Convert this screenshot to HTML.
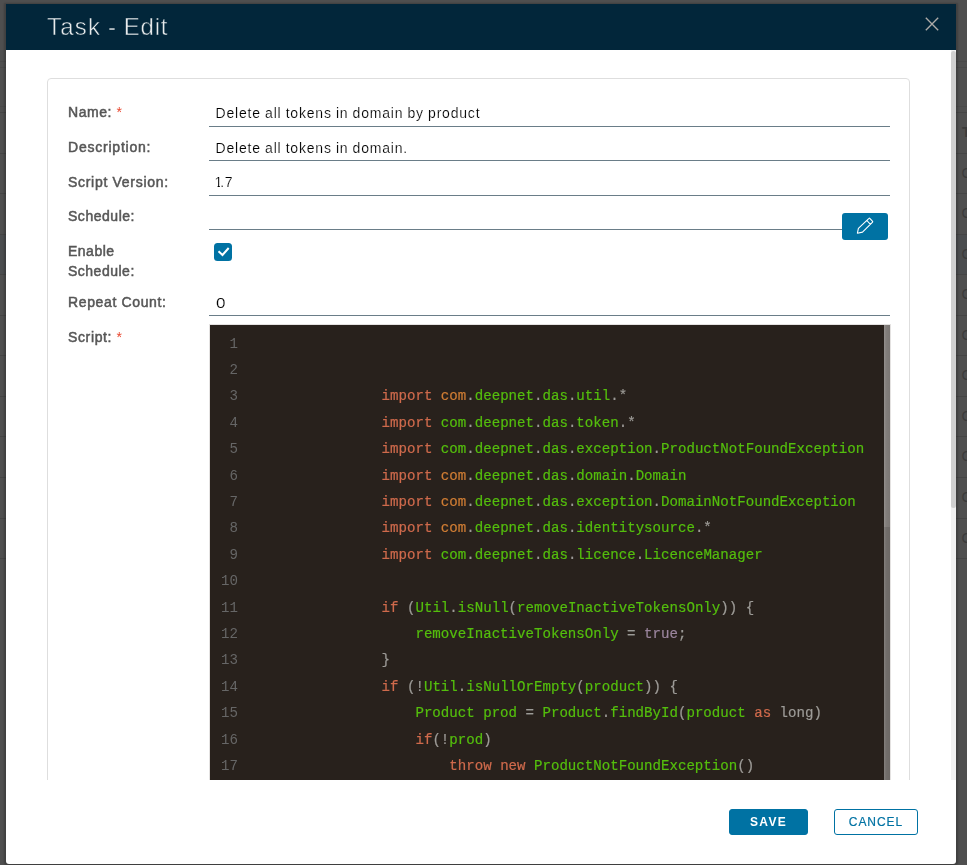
<!DOCTYPE html>
<html>
<head>
<meta charset="utf-8">
<title>Task - Edit</title>
<style>
html,body{margin:0;padding:0;}
body{width:967px;height:865px;overflow:hidden;position:relative;background:#4f4f4f;font-family:"Liberation Sans",sans-serif;}
.abs{position:absolute;}
/* backdrop table hints */
.bgline{position:absolute;height:1px;background:#454545;}
.bgchar{position:absolute;font-size:14px;line-height:16px;color:#3b3b3b;font-weight:bold;}
/* modal */
#modal{will-change:transform;position:absolute;left:6px;top:4px;width:950px;height:860px;background:#fff;border-radius:0 0 3px 3px;overflow:hidden;box-shadow:0 1px 2px 2px rgba(0,0,0,0.2);}
#hdr{position:absolute;left:0;top:0;width:950px;height:46px;background:#02263a;}
#title{position:absolute;left:41px;top:9px;font-size:24px;line-height:28px;color:#e8ebec;white-space:pre;letter-spacing:0.85px;word-spacing:-0.7px;-webkit-text-stroke:0.5px #02263a;}
/* scroll area */
#scroll{position:absolute;left:0;top:46px;width:950px;height:730px;overflow:hidden;}
#track{position:absolute;left:945px;top:0;width:5px;height:730px;background:#f1f1f1;}
#thumb{position:absolute;left:945px;top:1px;width:5px;height:456.5px;background:#d0d0d0;border-radius:2.5px;}
#card{position:absolute;left:41px;top:28px;width:863px;height:760px;border:1px solid #dedede;border-radius:4px;box-sizing:border-box;}
.lbl{position:absolute;left:62px;font-size:14px;line-height:20px;font-weight:normal;color:#565656;white-space:pre;letter-spacing:0.62px;-webkit-text-stroke:0.5px #565656;}
.req{color:#e8462e;-webkit-text-stroke:0;}
.val{position:absolute;left:209.6px;font-size:14px;line-height:20px;color:#000;white-space:pre;letter-spacing:0.8px;word-spacing:-0.5px;-webkit-text-stroke:0.18px #fff;}
.ul{position:absolute;left:203px;width:681px;height:1px;background:#6a7d88;}
/* code */
#cm{position:absolute;left:204px;top:275px;width:680px;height:460px;background:#28211c;overflow:hidden;font-family:"Liberation Mono",monospace;font-size:14.11px;}
.ln{position:absolute;left:0.5px;margin-top:1.3px;width:27.5px;text-align:right;color:#666666;line-height:26.4px;height:26.4px;white-space:pre;}
.cl{position:absolute;left:36.1px;margin-top:1.3px;-webkit-text-stroke:0.2px;color:#9d9b97;line-height:26.4px;height:26.4px;white-space:pre;}
.k{color:#cf6a4c}.v{color:#54be0d}.d{color:#cf7d34}.a{color:#9b859d}
#cmsb{position:absolute;left:674px;top:0;width:6px;height:460px;background:linear-gradient(to right,#85817e,#726e6b 35%,#6d6966);}
#cmth{position:absolute;left:674px;top:0;width:6px;height:202px;background:linear-gradient(to right,#94908d,#827e7b 35%,#7b7774);}
/* footer */
.btn{position:absolute;top:805px;height:26px;box-sizing:border-box;border-radius:3px;font-size:12px;line-height:24px;text-align:center;white-space:pre;}
#save{left:723px;width:79px;background:#0072a3;border:1px solid #0072a3;color:#fff;font-weight:bold;letter-spacing:1.3px;}
#cancel{left:828px;width:84px;background:#fff;border:1px solid #0072a3;color:#0072a3;letter-spacing:0.95px;-webkit-text-stroke:0.2px #0072a3;}
</style>
</head>
<body>
<!-- backdrop -->
<div id="bg">
<div class="abs" style="left:0;top:234px;width:967px;height:40px;background:#4b4d4f"></div>
<div class="bgline" style="left:0;top:106px;width:967px;background:#4a4a4a"></div>
<div class="bgline" style="left:0;top:112px;width:967px"></div>
<div class="bgline" style="left:0;top:153px;width:967px"></div>
<div class="bgline" style="left:0;top:193px;width:967px"></div>
<div class="bgline" style="left:0;top:234px;width:967px"></div>
<div class="bgline" style="left:0;top:274px;width:967px"></div>
<div class="bgline" style="left:0;top:315px;width:967px"></div>
<div class="bgline" style="left:0;top:355px;width:967px"></div>
<div class="bgline" style="left:0;top:396px;width:967px"></div>
<div class="bgline" style="left:0;top:436px;width:967px"></div>
<div class="bgline" style="left:0;top:477px;width:967px"></div>
<div class="bgline" style="left:0;top:518px;width:967px"></div>
<div class="bgline" style="left:0;top:558px;width:967px"></div>
<div class="bgline" style="left:0;top:61px;width:967px;background:#494949"></div>
<div class="bgline" style="left:0;top:67px;width:967px;background:#494949"></div>
<div class="bgchar" style="left:962px;top:124px">T</div>
<div class="bgchar" style="left:961.5px;top:165px;font-weight:normal">C</div>
<div class="bgchar" style="left:961.5px;top:205px;font-weight:normal">C</div>
<div class="bgchar" style="left:961.5px;top:246px;font-weight:normal">C</div>
<div class="bgchar" style="left:961.5px;top:286px;font-weight:normal">C</div>
<div class="bgchar" style="left:961.5px;top:327px;font-weight:normal">C</div>
<div class="bgchar" style="left:961.5px;top:367px;font-weight:normal">C</div>
<div class="bgchar" style="left:961.5px;top:408px;font-weight:normal">C</div>
<div class="bgchar" style="left:961.5px;top:448px;font-weight:normal">C</div>
<div class="bgchar" style="left:961.5px;top:489px;font-weight:normal">C</div>
<div class="bgchar" style="left:961.5px;top:530px;font-weight:normal">C</div>
</div>

<div id="modal">
  <div id="hdr">
    <div id="title"><span style="letter-spacing:1.2px">Task</span> - Edit</div>
    <svg class="abs" style="left:918px;top:12px" width="16" height="16" viewBox="0 0 16 16"><path d="M1.8 1.8 L14.2 14.2 M14.2 1.8 L1.8 14.2" stroke="#aeaba8" stroke-width="1.35" fill="none"/></svg>
  </div>
  <div id="scroll">
    <div id="track"></div><div id="thumb"></div>
    <div id="card"></div>
    <div class="lbl" style="top:52px;letter-spacing:0.57px">Name: <span class="req">*</span></div>
    <div class="lbl" style="top:86.5px;letter-spacing:0.78px">Description:</div>
    <div class="lbl" style="top:121.5px;letter-spacing:0.7px">Script Version:</div>
    <div class="lbl" style="top:156px;letter-spacing:0.53px">Schedule:</div>
    <div class="lbl" style="top:191px;letter-spacing:0.5px">Enable
Schedule:</div>
    <div class="lbl" style="top:242px;letter-spacing:0.64px">Repeat Count:</div>
    <div class="lbl" style="top:277px;letter-spacing:0.63px">Script: <span class="req">*</span></div>

    <div class="val" style="top:53px">Delete all tokens in domain by product</div>
    <div class="ul" style="top:76px"></div>
    <div class="val" style="top:88px">Delete all tokens in domain.</div>
    <div class="ul" style="top:110px"></div>
    <div class="val" style="top:122px;left:208.4px;letter-spacing:0;clip-path:polygon(0 0,5.4px 0,5.4px 100%,3.2px 100%,3.2px 50%,0 50%)">1</div><div class="val" style="top:122px;left:214.2px;letter-spacing:0">.</div><div class="val" style="top:122px;left:218.7px;letter-spacing:0">7</div>
    <div class="ul" style="top:145px"></div>
    <div class="ul" style="top:179px;width:633px"></div>
    <div class="abs" style="left:836px;top:163px;width:46px;height:27px;background:#0072a3;border-radius:3px;">
      <svg class="abs" style="left:14px;top:4.4px" width="18" height="18" viewBox="0 0 18 18"><path d="M1.4 16.2 L2.4 11.3 L13.0 1.4 Q13.4 1.0 13.8 1.4 L16.6 4.4 Q16.9 4.8 16.6 5.1 L6.5 15.1 Z M10.9 3.5 L14.4 7.3" stroke="#fff" stroke-width="1.1" fill="none" stroke-linejoin="round"/></svg>
    </div>
    <div class="abs" style="left:208px;top:193px;width:18px;height:18px;background:#0072a3;border-radius:3.5px;">
      <svg class="abs" style="left:0;top:0" width="18" height="18" viewBox="0 0 18 18"><path d="M4.5 8.3 L8.5 12 L14.7 5" stroke="#fff" stroke-width="2" fill="none"/></svg>
    </div>
    <div class="val" style="top:243px;transform:scaleX(1.22);transform-origin:0 0">0</div>
    <div class="ul" style="top:265px"></div>

    <div class="abs" style="left:203px;top:274px;width:682px;height:470px;background:#e4e2e1"></div>
    <div id="cm">
<div class="ln" style="top:4.4px">1</div><div class="cl" style="top:4.4px"></div>
<div class="ln" style="top:30.8px">2</div><div class="cl" style="top:30.8px"></div>
<div class="ln" style="top:57.2px">3</div><div class="cl" style="top:57.2px">                <span class="k">import</span> <span class="d">com</span>.<span class="v">deepnet</span>.<span class="v">das</span>.<span class="v">util</span>.*</div>
<div class="ln" style="top:83.6px">4</div><div class="cl" style="top:83.6px">                <span class="k">import</span> <span class="v">com</span>.<span class="v">deepnet</span>.<span class="v">das</span>.<span class="v">token</span>.*</div>
<div class="ln" style="top:110.0px">5</div><div class="cl" style="top:110.0px">                <span class="k">import</span> <span class="v">com</span>.<span class="v">deepnet</span>.<span class="v">das</span>.<span class="v">exception</span>.<span class="v">ProductNotFoundException</span></div>
<div class="ln" style="top:136.4px">6</div><div class="cl" style="top:136.4px">                <span class="k">import</span> <span class="d">com</span>.<span class="v">deepnet</span>.<span class="v">das</span>.<span class="v">domain</span>.<span class="v">Domain</span></div>
<div class="ln" style="top:162.8px">7</div><div class="cl" style="top:162.8px">                <span class="k">import</span> <span class="d">com</span>.<span class="v">deepnet</span>.<span class="v">das</span>.<span class="v">exception</span>.<span class="v">DomainNotFoundException</span></div>
<div class="ln" style="top:189.2px">8</div><div class="cl" style="top:189.2px">                <span class="k">import</span> <span class="d">com</span>.<span class="v">deepnet</span>.<span class="v">das</span>.<span class="v">identitysource</span>.*</div>
<div class="ln" style="top:215.6px">9</div><div class="cl" style="top:215.6px">                <span class="k">import</span> <span class="v">com</span>.<span class="v">deepnet</span>.<span class="v">das</span>.<span class="v">licence</span>.<span class="v">LicenceManager</span></div>
<div class="ln" style="top:242.0px">10</div><div class="cl" style="top:242.0px"></div>
<div class="ln" style="top:268.4px">11</div><div class="cl" style="top:268.4px">                <span class="k">if</span> (<span class="v">Util</span>.<span class="v">isNull</span>(<span class="v">removeInactiveTokensOnly</span>)) {</div>
<div class="ln" style="top:294.8px">12</div><div class="cl" style="top:294.8px">                    <span class="v">removeInactiveTokensOnly</span> = <span class="a">true</span>;</div>
<div class="ln" style="top:321.2px">13</div><div class="cl" style="top:321.2px">                }</div>
<div class="ln" style="top:347.6px">14</div><div class="cl" style="top:347.6px">                <span class="k">if</span> (!<span class="v">Util</span>.<span class="v">isNullOrEmpty</span>(<span class="v">product</span>)) {</div>
<div class="ln" style="top:374.0px">15</div><div class="cl" style="top:374.0px">                    <span class="v">Product</span> <span class="v">prod</span> = <span class="v">Product</span>.<span class="v">findById</span>(<span class="v">product</span> <span class="k">as</span> long)</div>
<div class="ln" style="top:400.4px">16</div><div class="cl" style="top:400.4px">                    <span class="k">if</span>(!<span class="v">prod</span>)</div>
<div class="ln" style="top:426.8px">17</div><div class="cl" style="top:426.8px">                        <span class="k">throw</span> <span class="k">new</span> <span class="v">ProductNotFoundException</span>()</div>
<div class="ln" style="top:453.2px">18</div><div class="cl" style="top:453.2px">                    </div>
      <div id="cmsb"></div><div id="cmth"></div>
    </div>
  </div>
  <div class="btn" id="save">SAVE</div>
  <div class="btn" id="cancel">CANCEL</div>
</div>
</body>
</html>
